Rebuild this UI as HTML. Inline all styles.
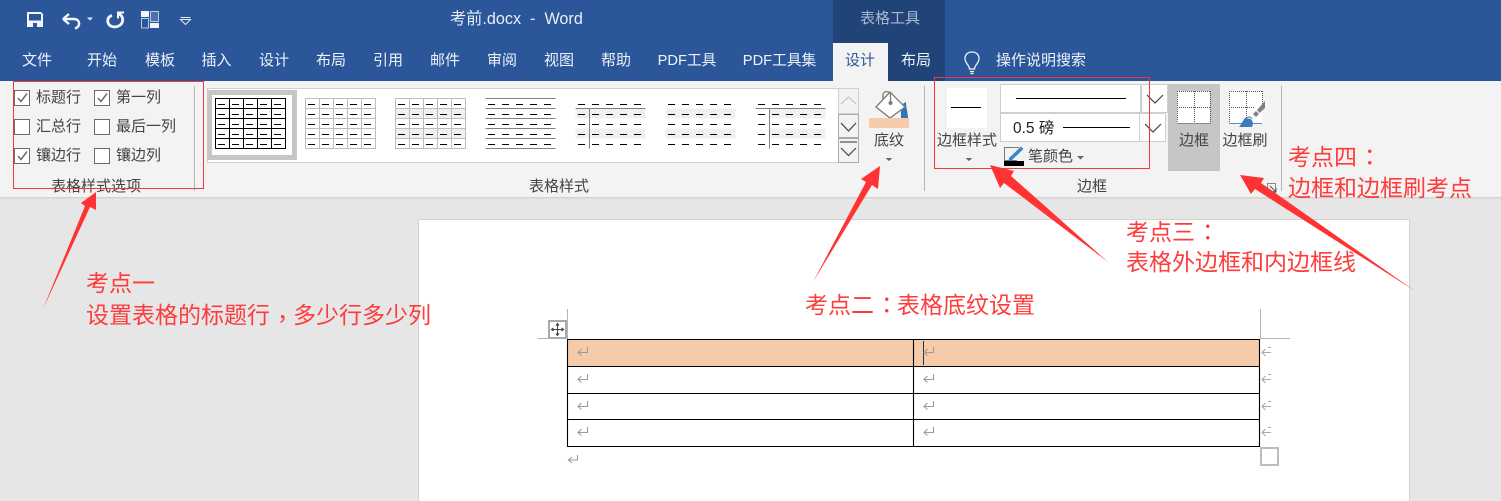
<!DOCTYPE html>
<html lang="zh"><head><meta charset="utf-8"><title>考前.docx - Word</title>
<style>
html,body{margin:0;padding:0;width:1501px;height:501px;overflow:hidden;background:#e6e6e6}
body{position:relative;font-family:"Liberation Sans","Noto Sans CJK SC",sans-serif}
svg{position:absolute;left:0;top:0}
.t{position:absolute;white-space:nowrap;line-height:20px;height:20px;font-size:15px;color:#444;z-index:2}
.w{color:#eef2f8}
.c{transform:translateX(-50%)}
.r{color:#ff3b3b;font-size:23px;line-height:30px;height:30px;z-index:4}
.p{display:inline-block;transform:translate(7px,-3px)}
.q{display:inline-block;transform:translate(7px,-1px)}
</style></head><body>
<svg width="1501" height="501" viewBox="0 0 1501 501" style="z-index:1">
<rect x="0" y="0" width="1501" height="81" fill="#2b579a"/>
<rect x="833" y="0" width="112" height="81" fill="#214478"/>
<rect x="833" y="43" width="55" height="38" fill="#f3f3f3"/>
<rect x="0" y="81" width="1501" height="116" fill="#f3f3f3"/>
<rect x="0" y="197" width="1501" height="1.5" fill="#d4d4d4"/>
<rect x="418.500" y="219.500" width="991" height="290" fill="#fff" stroke="#d2d2d2"/>
<!-- qat icons -->
<path d="M27 12H41L43 14V27H27ZM29 14V20.500H41V14ZM33 23V27H37V23Z" fill="#f3f5f9" fill-rule="evenodd"/>
<path d="M63 19L69 14M63 19L69 24M63 19H74C78 19 79.500 22 79 24.500 78.600 26.500 77 27.800 75 28.500" fill="none" stroke="#f3f5f9" stroke-width="2.400"/>
<path d="M87 17.500H93L90 20.500Z" fill="#e8edf5"/>
<path d="M112 15.500C107.500 16.800 107 21 108.500 23.800 110.500 27.500 117 28 120.800 24.500 124 21 123 15.500 118.500 13.800" fill="none" stroke="#f3f5f9" stroke-width="2.800"/>
<path d="M117 11.500H124V13.500H119V18.500H117Z" fill="#f3f5f9"/>
<rect x="141.500" y="18.500" width="7" height="9.500" fill="none" stroke="#b9c9e1"/>
<rect x="141" y="11" width="8" height="6" fill="#f3f5f9"/>
<rect x="150.500" y="11.500" width="8" height="10" fill="#4a72ad" stroke="#b9c9e1"/>
<rect x="150" y="23" width="9" height="5" fill="#f3f5f9"/>
<path d="M180.500 19.500L185.500 24.500L190.500 19.500ZM180.500 17.500H190.500" fill="none" stroke="#e3e9f3"/>
<!-- bulb -->
<path d="M969.500 69C969.500 65 965 63.500 965 58.500C965 54.500 968 52 972 52C976 52 979 54.500 979 58.500C979 63.500 974.500 65 974.500 69ZM970 71.500H974M970.500 73.500H973.500" fill="none" stroke="#f0f3f8" stroke-width="1.300"/>
<!-- checkboxes -->
<g fill="#fff" stroke="#6b6b6b">
<rect x="14.500" y="90.500" width="15" height="15"/><rect x="94.500" y="90.500" width="15" height="15"/>
<rect x="14.500" y="119.500" width="15" height="15"/><rect x="94.500" y="119.500" width="15" height="15"/>
<rect x="14.500" y="148.500" width="15" height="15"/><rect x="94.500" y="148.500" width="15" height="15"/>
</g>
<path d="M18 98L21 101.500L27 93.500M98 98L101 101.500L107 93.500M18 156L21 159.500L27 151.500" fill="none" stroke="#6e6e6e" stroke-width="1.500"/>
<!-- separators -->
<path d="M194.500 86V191M924.500 86V191M1281.500 86V191" stroke="#b4b4b4" fill="none"/>
<!-- gallery -->
<rect x="207.500" y="88.500" width="651" height="74" fill="#fff" stroke="#d0d0d0"/>
<rect x="209.500" y="92.500" width="85" height="65" fill="#fff" stroke="#c6c6c6" stroke-width="5"/>
<g fill="#f0f0f0">
<rect x="395.500" y="108.500" width="70" height="10"/><rect x="395.500" y="128.500" width="70" height="10"/>
<rect x="575.500" y="108.500" width="70" height="10"/><rect x="575.500" y="128.500" width="70" height="10"/>
<rect x="665.500" y="108.500" width="70" height="10"/><rect x="665.500" y="128.500" width="70" height="10"/>
<rect x="769.500" y="108.500" width="56" height="10"/><rect x="769.500" y="128.500" width="56" height="10"/>
</g>
<path d="M215.500 98.500h70v50h-70zM229.500 98.500v50M243.500 98.500v50M257.500 98.500v50M271.500 98.500v50M215.500 108.500h70M215.500 118.500h70M215.500 128.500h70M215.500 138.500h70" fill="none" stroke="#000"/>
<path d="M305.500 98.500h70v50h-70zM319.500 98.500v50M333.500 98.500v50M347.500 98.500v50M361.500 98.500v50M305.500 108.500h70M305.500 118.500h70M305.500 128.500h70M305.500 138.500h70" fill="none" stroke="#bdbdbd"/>
<path d="M395.500 98.500h70v50h-70zM409.500 98.500v50M423.500 98.500v50M437.500 98.500v50M451.500 98.500v50M395.500 108.500h70M395.500 118.500h70M395.500 128.500h70M395.500 138.500h70" fill="none" stroke="#bdbdbd"/>
<path d="M485.500 98.500h70M485.500 108.500h70M485.500 118.500h70M485.500 128.500h70M485.500 138.500h70M485.500 148.500h70" fill="none" stroke="#808080"/>
<path d="M575.500 108.500h70M589.500 108.500v40M755.500 108.500h70M769.500 108.500v40" fill="none" stroke="#808080"/>
<g stroke="#000" fill="none" stroke-dasharray="7 7">
<path d="M218 104.500h67M218 114.500h67M218 124.500h67M218 134.500h67M218 144.500h67"/>
<path d="M308 104.500h67M308 114.500h67M308 124.500h67M308 134.500h67M308 144.500h67"/>
<path d="M398 104.500h67M398 114.500h67M398 124.500h67M398 134.500h67M398 144.500h67"/>
<path d="M488 104.500h67M488 114.500h67M488 124.500h67M488 134.500h67M488 144.500h67"/>
<path d="M578 104.500h67M578 114.500h67M578 124.500h67M578 134.500h67M578 144.500h67"/>
<path d="M668 104.500h67M668 114.500h67M668 124.500h67M668 134.500h67M668 144.500h67"/>
<path d="M758 104.500h67M758 114.500h67M758 124.500h67M758 134.500h67M758 144.500h67"/>
</g>
<!-- scroll buttons -->
<rect x="838.500" y="88.500" width="20" height="25" fill="#f3f3f3" stroke="#d0d0d0"/>
<rect x="838.500" y="114.500" width="20" height="23" fill="#f3f3f3" stroke="#ababab"/>
<rect x="838.500" y="138.500" width="20" height="24" fill="#f3f3f3" stroke="#ababab"/>
<path d="M841 104L848.500 97L856 104" fill="none" stroke="#c8c8c8" stroke-width="1.200"/>
<path d="M841 123L848.500 131L856 123M841 148L848.500 155.500L856 148" fill="none" stroke="#444" stroke-width="1.200"/>
<path d="M840 142H857" stroke="#555" stroke-width="1.200"/>
<!-- shading icon -->
<path d="M906 102C906 108 908 113 908 118H901V105Z" fill="#2e75b6"/>
<path d="M876 107L890 92L905 107L890 118Z" fill="#fff" stroke="#7b7b7b" stroke-width="1.300"/>
<path d="M883 99V95C883 90.500 890 90.500 890.500 95V103" fill="none" stroke="#7b7b7b" stroke-width="1.300"/>
<circle cx="890.500" cy="103" r="2" fill="#7b7b7b"/>
<rect x="869" y="118" width="40" height="10" fill="#f5cbaa"/>
<!-- carets -->
<path d="M885.500 158H892.500L889 161ZM965.500 158H972.500L969 161ZM1190.500 158H1197.500L1194 161ZM1077 156H1084L1080.500 159.500Z" fill="#666"/>
<!-- border style -->
<rect x="947" y="88" width="40" height="40" fill="#fff"/>
<path d="M951 107.500H981" stroke="#000"/>
<!-- line dropdowns -->
<rect x="1000.500" y="84.500" width="140" height="28" fill="#fff" stroke="#cfcfcf"/>
<rect x="1141.500" y="84.500" width="26" height="28" fill="#fff" stroke="#cfcfcf"/>
<rect x="1000.500" y="113.500" width="139" height="28" fill="#fff" stroke="#cfcfcf"/>
<rect x="1139.500" y="113.500" width="26" height="28" fill="#fff" stroke="#cfcfcf"/>
<path d="M1016 98.500H1126M1063 127.500H1130" stroke="#000"/>
<path d="M1147 95L1155 103L1163 95M1145 124L1153 132L1161 124" fill="none" stroke="#444" stroke-width="1.200"/>
<!-- pen color -->
<path d="M1019 147.500H1004.500V160.500H1017" fill="none" stroke="#777"/>
<path d="M1009 158L1021 146.500L1023.500 149L1011.500 160.500L1008.500 161Z" fill="#3d85c6"/>
<rect x="1004" y="161" width="20" height="5" fill="#000"/>
<!-- border button -->
<rect x="1168" y="84" width="52" height="87" fill="#c6c6c6"/>
<rect x="1177" y="91" width="33" height="32" fill="#fff"/>
<path d="M1177 91.500H1211M1177 107.500H1211M1177.500 91V123M1194.500 91V123M1210.500 91V123" fill="none" stroke="#555" stroke-dasharray="1 1"/>
<path d="M1177 123.500H1211" stroke="#8a8a8a"/>
<!-- brush -->
<rect x="1229" y="91" width="33" height="32" fill="#fff"/>
<path d="M1229 91.500H1263M1229 107.500H1255M1229.500 91V123M1246.500 91V120M1262.500 91V105" fill="none" stroke="#555" stroke-dasharray="1 1"/>
<path d="M1229 123.500H1262" stroke="#5b8cc2"/>
<path d="M1239 127C1243 123 1243 117 1249 116.500C1253 116.500 1254 121 1252 127Z" fill="#3f7bb8"/>
<path d="M1247.500 118.500A4 4 0 0 1 1253 122" fill="none" stroke="#fff"/>
<path d="M1253 114L1256 111L1259 114L1256 117ZM1257 110L1265 101V108L1259.500 113Z" fill="#808080"/>
<!-- launcher -->
<rect x="1267.500" y="183.500" width="8" height="8" fill="none" stroke="#888"/>
<path d="M1270 186L1276 192M1276 188V192H1272" fill="none" stroke="#555"/>
<!-- table -->
<rect x="567.500" y="339.500" width="692" height="27" fill="#f5cbaa"/>
<path d="M567.500 339.500H1259.500V446.500H567.500ZM567.500 366.500H1259.500M567.500 393.500H1259.500M567.500 419.500H1259.500M913.500 339.500V446.500" fill="none" stroke="#000" stroke-width="1.100"/>
<path d="M923.500 341V365" stroke="#26324a"/>
<path d="M567.500 309V338.500H538M1260.500 309V338.500H1290" fill="none" stroke="#b5b5b5"/>
<rect x="549" y="321" width="17" height="17" fill="#fff" stroke="#aaa" stroke-width="2"/>
<path d="M557.500 324V335M552 329.500H563M556 325.500L557.500 323.500L559 325.500M556 333.500L557.500 335.500L559 333.500M553.500 328L551.500 329.500L553.500 331M561.500 328L563.500 329.500L561.500 331" fill="none" stroke="#444" stroke-width="1.100"/>
<rect x="1261" y="448" width="17" height="17" fill="#fff" stroke="#bdbdbd" stroke-width="2"/>
<path d="M587.500 347V352.500H578M581.500 349L578 352.500L581.500 355.500M587.500 374V379.500H578M581.500 376L578 379.500L581.500 382.500M587.500 401V406.500H578M581.500 403L578 406.500L581.500 409.500M587.500 427V432.500H578M581.500 429L578 432.500L581.500 435.500M933.500 347V352.500H924M927.500 349L924 352.500L927.500 355.500M933.500 374V379.500H924M927.500 376L924 379.500L927.500 382.500M933.500 401V406.500H924M927.500 403L924 406.500L927.500 409.500M933.500 427V432.500H924M927.500 429L924 432.500L927.500 435.500M577.500 455V460H569M572 457L568.500 460L572 463" fill="none" stroke="#9c9c9c" stroke-width="1.100"/>
<path d="M1271 352.500H1262M1265.500 349L1262 352.500L1265.500 356M1268 347.500H1271M1271 379.500H1262M1265.500 376L1262 379.500L1265.500 383M1268 374.500H1271M1271 406.500H1262M1265.500 403L1262 406.500L1265.500 410M1268 401.500H1271M1271 432.500H1262M1265.500 429L1262 432.500L1265.500 436M1268 427.500H1271" fill="none" stroke="#aaa" stroke-width="1.100"/>
</svg>

<span class="t w c" style="left:37px;top:51px">文件</span>
<span class="t w c" style="left:102px;top:51px">开始</span>
<span class="t w c" style="left:160px;top:51px">模板</span>
<span class="t w c" style="left:216.500px;top:51px">插入</span>
<span class="t w c" style="left:274px;top:51px">设计</span>
<span class="t w c" style="left:331px;top:51px">布局</span>
<span class="t w c" style="left:388px;top:51px">引用</span>
<span class="t w c" style="left:445px;top:51px">邮件</span>
<span class="t w c" style="left:502px;top:51px">审阅</span>
<span class="t w c" style="left:559px;top:51px">视图</span>
<span class="t w c" style="left:616px;top:51px">帮助</span>
<span class="t w c" style="left:687px;top:51px;font-size:14.700px">PDF工具</span>
<span class="t w c" style="left:779.500px;top:51px;font-size:14.700px">PDF工具集</span>
<span class="t c" style="left:860px;top:51px;color:#2b579a">设计</span>
<span class="t w c" style="left:916px;top:51px">布局</span>
<span class="t w" style="left:996px;top:51px">操作说明搜索</span>
<span class="t" style="left:450px;top:9px;font-size:16.200px;color:#e8eef7;white-space:pre">考前.docx  -  Word</span>
<span class="t c" style="left:890px;top:9px;color:#a9b8d0">表格工具</span>

<span class="t" style="left:36px;top:88px">标题行</span>
<span class="t" style="left:116px;top:88px">第一列</span>
<span class="t" style="left:36px;top:117px">汇总行</span>
<span class="t" style="left:116px;top:117px">最后一列</span>
<span class="t" style="left:36px;top:146px">镶边行</span>
<span class="t" style="left:116px;top:146px">镶边列</span>
<span class="t c" style="left:96px;top:177px">表格样式选项</span>
<span class="t c" style="left:559px;top:177px">表格样式</span>
<span class="t c" style="left:889px;top:131px">底纹</span>
<span class="t c" style="left:967px;top:131px">边框样式</span>
<span class="t" style="left:1013px;top:119px;font-size:15.500px;color:#222;white-space:pre">0.5 磅</span>
<span class="t" style="left:1028px;top:147px">笔颜色</span>
<span class="t c" style="left:1194px;top:131px">边框</span>
<span class="t c" style="left:1245px;top:131px">边框刷</span>
<span class="t c" style="left:1092px;top:177px">边框</span>

<svg width="1501" height="501" viewBox="0 0 1501 501" style="z-index:3;pointer-events:none">
<rect x="13.500" y="81.500" width="190" height="107" fill="none" stroke="#f03a3a"/>
<rect x="934.500" y="77.500" width="215" height="91" fill="none" stroke="#f03a3a"/>
<g fill="#ff3333">
<path d="M43 309L85 206L81 203L96 192L96 210L90 207Z"/>
<path d="M813 282L866 182L861 179L880 166L878 189L872 185Z"/>
<path d="M1108 262L1004 183L1000 188L990 165L1014 171L1011 176Z"/>
<path d="M1415 291L1255 189L1251 194L1240 175L1264 178L1261 183Z"/>
</g>
</svg>

<span class="t r" style="left:86px;top:268px">考点一</span>
<span class="t r" style="left:86px;top:300px">设置表格的标题行<span class="p">，</span>多少行多少列</span>
<span class="t r" style="left:805px;top:290px">考点二<span class="q">：</span>表格底纹设置</span>
<span class="t r" style="left:1126px;top:217px">考点三<span class="q">：</span></span>
<span class="t r" style="left:1126px;top:247px">表格外边框和内边框线</span>
<span class="t r" style="left:1288px;top:142px">考点四<span class="q">：</span></span>
<span class="t r" style="left:1288px;top:173px">边框和边框刷考点</span>
</body></html>
